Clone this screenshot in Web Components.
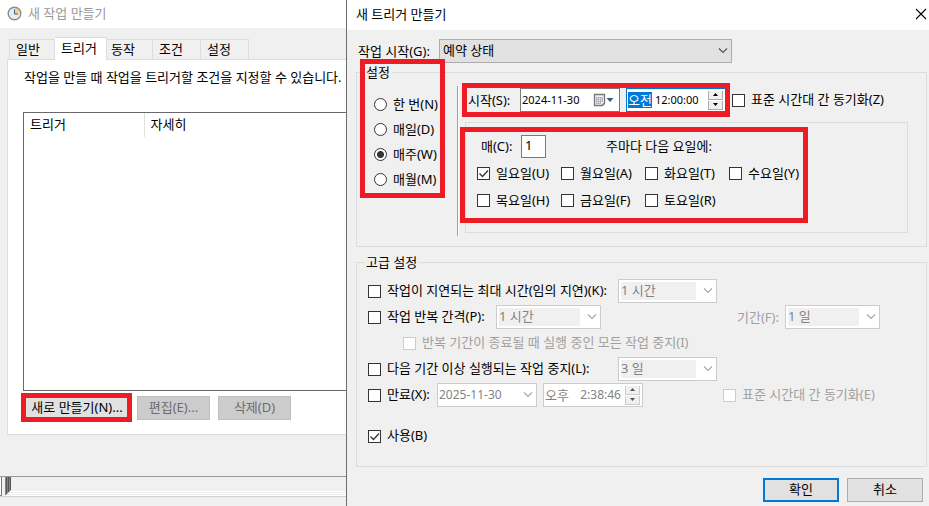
<!DOCTYPE html>
<html lang="ko">
<head>
<meta charset="utf-8">
<title>새 트리거 만들기</title>
<style>
  body {
    margin: 0;
    background: #f0f0f0;
    color: #000;
    font: 13px/16px "Noto Sans", "Noto Sans CJK KR", sans-serif;
  }
</style>
</head>
<body>
<task-desktop></task-desktop>

<script>
const baseCss = `
  * { box-sizing: border-box; }
  :host { display: block; white-space: nowrap; }
  :host([hidden]) { display: none; }
  input, select, button { font: inherit; color: inherit; margin: 0; padding: 0; border: 0; border-radius: 0; outline: 0; }
`;

const chevron = `<svg class="chevron" width="10" height="6" viewBox="0 0 10 6" aria-hidden="true"><path d="M1 .5l4 4 4-4" fill="none" stroke="currentColor" stroke-width="1.2"/></svg>`;

class WinElement extends HTMLElement {
  connectedCallback() {
    if (this.shadowRoot) return;
    this.attachShadow({ mode: 'open' });
    this.shadowRoot.innerHTML = `<style>${baseCss}${this.css()}</style>${this.html()}`;
  }
  attr(name) { return this.getAttribute(name) || ''; }
  get off() { return this.hasAttribute('disabled') ? 'disabled' : ''; }
}

// red outline drawn over a group of controls; --out sets how far it reaches
class MarkFrame extends WinElement {
  css() {
    return `
      :host { position: relative; }
      :host::after {
        content: '';
        position: absolute;
        inset: var(--out);
        border: 5px solid #ed1c24;
        pointer-events: none;
      }
    `;
  }
  html() { return `<slot></slot>`; }
}
customElements.define('mark-frame', MarkFrame);

class WinButton extends WinElement {
  css() {
    return `
      button { display: block; width: 100%; height: 24px; padding-bottom: 2px; background: #e1e1e1; border: 1px solid #adadad; }
      button:disabled { background: #ccc; border-color: #bfbfbf; color: #6d6d6d; }
      :host([primary]) button { border: 2px solid #0078d7; }
    `;
  }
  html() { return `<button type="button" ${this.off}><slot></slot></button>`; }
}
customElements.define('win-button', WinButton);

class WinCheck extends WinElement {
  css() {
    return `
      label { display: flex; align-items: center; gap: 6px; height: 100%; }
      .box { display: grid; }
      .box > * { grid-area: 1 / 1; }
      .text { padding-bottom: 2px; }
      input { appearance: none; width: 13px; height: 13px; background: #fff; border: 1px solid #333; }
      svg { display: none; pointer-events: none; }
      input:checked + svg { display: block; }
      :host([disabled]) { color: #a0a0a0; }
      input:disabled { border-color: #ccc; }
    `;
  }
  html() {
    const checked = this.hasAttribute('checked') ? 'checked' : '';
    return `
      <label>
        <span class="box">
          <input type="checkbox" ${checked} ${this.off}>
          <svg width="13" height="13" viewBox="0 0 13 13"><path d="M2.5 6.5l3 3 5.5-6" fill="none" stroke="#333" stroke-width="1.3"/></svg>
        </span>
        <span class="text"><slot></slot></span>
      </label>
    `;
  }
}
customElements.define('win-check', WinCheck);

class WinRadios extends WinElement {
  css() {
    return `
      label { display: flex; align-items: center; gap: 6px; height: 25px; }
      span { padding-bottom: 2px; }
      input { appearance: none; width: 13px; height: 13px; background: #fff; border: 1px solid #333; border-radius: 50%; }
      input:checked { background: radial-gradient(circle, #333 3px, #fff 4px); }
    `;
  }
  html() {
    return this.attr('options').split('|').map(text => `
      <label><input type="radio" name="period" ${text === this.attr('value') ? 'checked' : ''}><span>${text}</span></label>
    `).join('');
  }
}
customElements.define('win-radios', WinRadios);

class WinSelect extends WinElement {
  css() {
    return `
      :host { display: flex; align-items: center; }
      label { flex: none; width: var(--label, auto); }
      .field { display: grid; flex: 1; align-items: center; }
      .field > * { grid-area: 1 / 1; }
      select { appearance: none; width: 100%; height: 24px; padding: 0 24px 2px 3px; background: #e1e1e1; border: 1px solid #adadad; }
      .chevron { justify-self: end; margin-right: 4px; color: #555; pointer-events: none; }
      :host([disabled]) { color: #a0a0a0; }
      select:disabled {
        opacity: 1;
        color: #838383;
        padding: 0 20px 2px 2px;
        background: #f0f0f0;
        border-color: #ccc;
        box-shadow: inset 0 0 0 2px #fff, inset -20px 0 #fff;
      }
      select:disabled + .chevron { color: #aaa; }
    `;
  }
  html() {
    const label = this.attr('label');
    return `
      ${label ? `<label for="s">${label}</label>` : ''}
      <span class="field">
        <select id="s" ${label ? '' : `aria-label="${this.attr('name')}"`} ${this.off}><option>${this.attr('value')}</option></select>
        ${chevron}
      </span>
    `;
  }
}
customElements.define('win-select', WinSelect);

class WinDate extends WinElement {
  css() {
    return `
      :host { display: flex; align-items: center; }
      label { flex: none; width: var(--label, auto); }
      .field { display: flex; flex: 1; min-width: 0; height: 24px; align-items: center; background: #fff; border: 1px solid #7a7a7a; padding: 0 5px 0 1px; }
      input { flex: 1; min-width: 0; background: none; font-size: 11px; }
      button { display: flex; align-items: center; background: none; }
      :host([disabled]) .field { border-color: #ccc; color: #838383; padding-right: 3px; }
      :host([disabled]) input { font-size: 12px; }
      :host([disabled]) button { color: #aaa; }
    `;
  }
  html() {
    const label = this.attr('label');
    const calendar = `
      <svg width="21" height="14" viewBox="0 0 21 14" aria-hidden="true">
        <path d="M1.500 1.500h10v9l-2 2h-8z" fill="#f4f2f2" stroke="#7b7476" stroke-width="1.300"/>
        <path d="M3 4.500h7M3 6.500h7M3 8.500h7M3 10.500h5M3.500 4v7M5.500 4v7M7.500 4v7M9.500 4v5" stroke="#a3a6b8" stroke-width=".7"/>
        <path d="M9.500 12.500v-2h2z" fill="#7b7476"/>
        <path d="M13.500 5h7l-3.500 4z" fill="#44597b"/>
      </svg>`;
    return `
      ${label ? `<label for="d">${label}</label>` : ''}
      <span class="field">
        <input id="d" type="text" value="${this.attr('value')}" ${label ? '' : 'aria-label="날짜"'} ${this.off}>
        <button type="button" aria-label="달력" ${this.off}>${this.off ? chevron : calendar}</button>
      </span>
    `;
  }
}
customElements.define('win-date', WinDate);

class WinTime extends WinElement {
  css() {
    return `
      .field { display: flex; height: 24px; align-items: center; background: #fff; border: 1px solid #0078d7; padding: 0 2px 0 1px; }
      input { height: 16px; background: none; }
      .half { width: 24px; background: #0078d7; color: #fff; }
      .clock { flex: 1; min-width: 0; padding-left: 3px; font-size: 11px; }
      .spin { display: grid; gap: 1px; }
      .spin button { display: grid; place-items: center; width: 15px; height: 9px; background: #f0f0f0; border: 1px solid #aaa; border-width: 0 1px 1px; }
      :host([disabled]) .field { border-color: #ccc; color: #838383; }
      :host([disabled]) .half { background: none; color: inherit; }
      :host([disabled]) .clock { font-size: 12px; text-align: right; padding-right: 4px; }
      :host([disabled]) .spin button { border-color: #ccc; color: #555; }
    `;
  }
  html() {
    const [half, clock] = this.attr('value').split(' ');
    return `
      <span class="field">
        <input class="half" type="text" aria-label="오전/오후" value="${half}" ${this.off}>
        <input class="clock" type="text" aria-label="시각" value="${clock}" ${this.off}>
        <span class="spin">
          <button type="button" aria-label="늘리기" ${this.off}><svg width="5" height="3" viewBox="0 0 5 3"><path d="M0 3l2.500-3L5 3z" fill="currentColor"/></svg></button>
          <button type="button" aria-label="줄이기" ${this.off}><svg width="5" height="3" viewBox="0 0 5 3"><path d="M0 0l2.500 3L5 0z" fill="currentColor"/></svg></button>
        </span>
      </span>
    `;
  }
}
customElements.define('win-time', WinTime);

class WinGroup extends WinElement {
  css() {
    return `
      fieldset { margin: 0; min-width: 0; padding: 0; border: 1px solid #dcdcdc; }
      legend { margin-left: 7px; padding: 0 2px; }
    `;
  }
  html() { return `<fieldset><legend>${this.attr('legend')}</legend><slot></slot></fieldset>`; }
}
customElements.define('win-group', WinGroup);

class TaskWindow extends WinElement {
  css() {
    return `
      :host { display: flex; flex-direction: column; overflow: hidden; }
      header { display: flex; align-items: center; gap: 6px; height: 28px; padding: 0 7px 2px; background: #fff; color: #999; }
      .tabs { display: flex; align-items: flex-end; height: 31px; padding-left: 9px; }
      .tabs button { height: 20px; width: 48px; text-align: left; padding: 0 0 2px 6px; background: #f0f0f0; border: 1px solid #dcdcdc; border-width: 1px 1px 0 0; }
      .tabs button:first-child { width: 46px; border-left-width: 1px; }
      .tabs .active { position: relative; width: 52px; height: 23px; margin-bottom: -1px; background: #fff; }
      .tabs .active + button { width: 46px; padding-left: 4px; }
      .panel { margin-left: 7px; padding: 9px 0 14px 15px; background: #fff; border: 1px solid #dcdcdc; border-right: 0; }
      p { margin: 0; padding-left: 1px; }
      .list { height: 279px; margin-top: 27px; border: 1px solid #696969; border-right: 0; }
      table { width: 100%; border-collapse: collapse; table-layout: fixed; }
      th { height: 24px; padding: 0 6px 2px; font-weight: normal; text-align: left; }
      th:first-child { width: 120px; border-right: 1px solid #e0e0e0; }
      .actions { display: flex; gap: 8px; margin-top: 5px; padding-left: 2px; }
      .actions > * { width: 73px; }
      .actions mark-frame { width: 104px; }
      .edge { display: flex; height: 21px; margin-top: 41px; border-top: 1px solid #999; border-bottom: 1px solid #d0d0d0; }
    `;
  }
  html() {
    return `
      <header>
        <svg width="15" height="15" viewBox="0 0 15 15" aria-hidden="true">
          <circle cx="7.500" cy="7.500" r="6.300" fill="#e2edf4" stroke="#8b8b8b" stroke-width="1.400"/>
          <path d="M7.500 7.500V2.200a5.300 5.300 0 0 1 5.300 5.300z" fill="#f3cf87"/>
          <path d="M7.500 3.500v4.500h3.500" fill="none" stroke="#4c5b6b"/>
        </svg>
        <span>새 작업 만들기</span>
      </header>
      <div class="tabs" role="tablist">
        <button role="tab">일반</button><button role="tab" class="active" aria-selected="true">트리거</button><button role="tab">동작</button><button role="tab">조건</button><button role="tab">설정</button>
      </div>
      <div class="panel" role="tabpanel">
        <p>작업을 만들 때 작업을 트리거할 조건을 지정할 수 있습니다.</p>
        <div class="list"><table><thead><tr><th>트리거</th><th>자세히</th></tr></thead></table></div>
        <div class="actions">
          <mark-frame style="--out: -3px -3px -2px -4px"><win-button>새로 만들기(N)...</win-button></mark-frame>
          <win-button disabled>편집(E)...</win-button>
          <win-button disabled>삭제(D)</win-button>
        </div>
      </div>
      <div class="edge">
        <svg width="100%" height="19" aria-hidden="true">
          <path d="M0 0h1v18h-1z" fill="#fff"/>
          <path d="M1.500 0v18.500h-2" fill="none" stroke="#777"/>
          <path d="M10 14.500h2000M8 16.500h2000M6 18.500h2000" stroke="#fff"/>
          <path d="M5 0h6v13l-5 5h-1z" fill="#858585"/>
          <path d="M6.500 0v17M8.500 0v15M10.500 0v13" stroke="#555"/>
        </svg>
      </div>
    `;
  }
}
customElements.define('task-window', TaskWindow);

class TriggerDialog extends WinElement {
  css() {
    return `
      :host { background: #f0f0f0; border-left: 1px solid #6b6b6b; }
      header { display: flex; align-items: center; justify-content: space-between; height: 30px; padding: 0 2px 2px 9px; background: #fff; }
      header button { display: flex; background: none; }
      main { padding: 9px 2px 3px 9px; }
      .begin { width: 374px; margin: 0 0 1px 2px; --label: 81px; }
      .schedule { display: grid; grid-template-columns: 83px 2px 1fr; padding: 6px 18px 10px 17px; }
      .kind { width: 64px; align-self: start; margin-top: 6px; }
      .rule { border-left: 1px solid #a0a0a0; border-right: 1px solid #fff; }
      .detail { padding: 2px 0 3px 6px; }
      .row { display: flex; align-items: center; gap: 6px; }
      .start { padding-left: 3px; margin-right: -18px; }
      .pair { display: flex; gap: 6px; }
      .pair win-date { width: 152px; --label: 52px; }
      win-time, .date { width: 100px; }
      .week { margin-top: 10px; padding: 11px 0 18px 11px; border: 1px solid #dcdcdc; }
      .week mark-frame { width: 336px; }
      .every { display: flex; align-items: center; height: 24px; padding-left: 4px; margin-bottom: 2px; }
      .every label { width: 40px; }
      .every input { width: 25px; height: 23px; margin-right: 60px; padding: 0 0 3px 3px; border: 1px solid #7a7a7a; background: #fff; }
      .days { display: grid; grid-template-columns: repeat(4, 84px); grid-auto-rows: 27px; }
      .advanced { margin-top: 7px; }
      .options { padding: 8px 46px 17px 11px; }
      .options .row { height: 26px; gap: 0; }
      .long { width: 250px; }
      .mid { width: 128px; }
      .short { width: 69px; }
      .combo { width: 99px; }
      .sub { padding-left: 35px; }
      .date { margin-right: 6px; }
      .end { margin-left: auto; width: 157px; }
      .term { width: 143px; --label: 48px; }
      .repeat { width: 105px; }
      .use { margin-top: 15px; }
      footer { display: flex; justify-content: flex-end; gap: 8px; padding: 11px 4px 0 0; }
      footer win-button { width: 76px; }
    `;
  }
  html() {
    return `
      <header>
        <span>새 트리거 만들기</span>
        <button type="button" aria-label="닫기"><svg width="12" height="12" viewBox="0 0 12 12"><path d="M1 1l10 10M11 1L1 11" stroke="#000" stroke-width="1.100"/></svg></button>
      </header>
      <main>
        <win-select class="begin" label="작업 시작(G):" value="예약 상태"></win-select>
        <win-group legend="설정">
          <div class="schedule">
            <mark-frame class="kind" style="--out: -33px -7px -6px -14px">
              <win-radios options="한 번(N)|매일(D)|매주(W)|매월(M)" value="매주(W)"></win-radios>
            </mark-frame>
            <div class="rule"></div>
            <div class="detail">
              <div class="row start">
                <mark-frame style="--out: -5px -4px -5px -6px">
                  <div class="pair">
                    <win-date label="시작(S):" value="2024-11-30"></win-date>
                    <win-time value="오전 12:00:00"></win-time>
                  </div>
                </mark-frame>
                <win-check>표준 시간대 간 동기화(Z)</win-check>
              </div>
              <div class="week">
                <mark-frame style="--out: -7px 5px -9px -17px">
                  <div class="every"><label for="weeks">매(C):</label><input id="weeks" type="text" value="1"><span>주마다 다음 요일에:</span></div>
                  <div class="days">
                    <win-check checked>일요일(U)</win-check>
                    <win-check>월요일(A)</win-check>
                    <win-check>화요일(T)</win-check>
                    <win-check>수요일(Y)</win-check>
                    <win-check>목요일(H)</win-check>
                    <win-check>금요일(F)</win-check>
                    <win-check>토요일(R)</win-check>
                  </div>
                </mark-frame>
              </div>
            </div>
          </div>
        </win-group>
        <win-group class="advanced" legend="고급 설정">
          <div class="options">
            <div class="row">
              <win-check class="long">작업이 지연되는 최대 시간(임의 지연)(K):</win-check>
              <win-select class="combo" name="최대 지연 시간" value="1 시간" disabled></win-select>
            </div>
            <div class="row">
              <win-check class="mid">작업 반복 간격(P):</win-check>
              <win-select class="repeat" name="반복 간격" value="1 시간" disabled></win-select>
              <win-select class="end term" label="기간(F):" value="1 일" disabled></win-select>
            </div>
            <div class="row sub">
              <win-check disabled>반복 기간이 종료될 때 실행 중인 모든 작업 중지(I)</win-check>
            </div>
            <div class="row">
              <win-check class="long">다음 기간 이상 실행되는 작업 중지(L):</win-check>
              <win-select class="combo" name="중지 기간" value="3 일" disabled></win-select>
            </div>
            <div class="row">
              <win-check class="short">만료(X):</win-check>
              <win-date class="date" value="2025-11-30" disabled></win-date>
              <win-time value="오후 2:38:46" disabled></win-time>
              <win-check class="end" disabled>표준 시간대 간 동기화(E)</win-check>
            </div>
            <div class="row use"><win-check checked>사용(B)</win-check></div>
          </div>
        </win-group>
        <footer>
          <win-button primary>확인</win-button>
          <win-button>취소</win-button>
        </footer>
      </main>
    `;
  }
}
customElements.define('trigger-dialog', TriggerDialog);

class TaskDesktop extends WinElement {
  css() {
    return `
      :host { display: grid; grid-template-columns: minmax(0, 346fr) minmax(0, 583fr); min-height: 100vh; }
    `;
  }
  html() { return `<task-window></task-window><trigger-dialog></trigger-dialog>`; }
}
customElements.define('task-desktop', TaskDesktop);
</script>
</body>
</html>
